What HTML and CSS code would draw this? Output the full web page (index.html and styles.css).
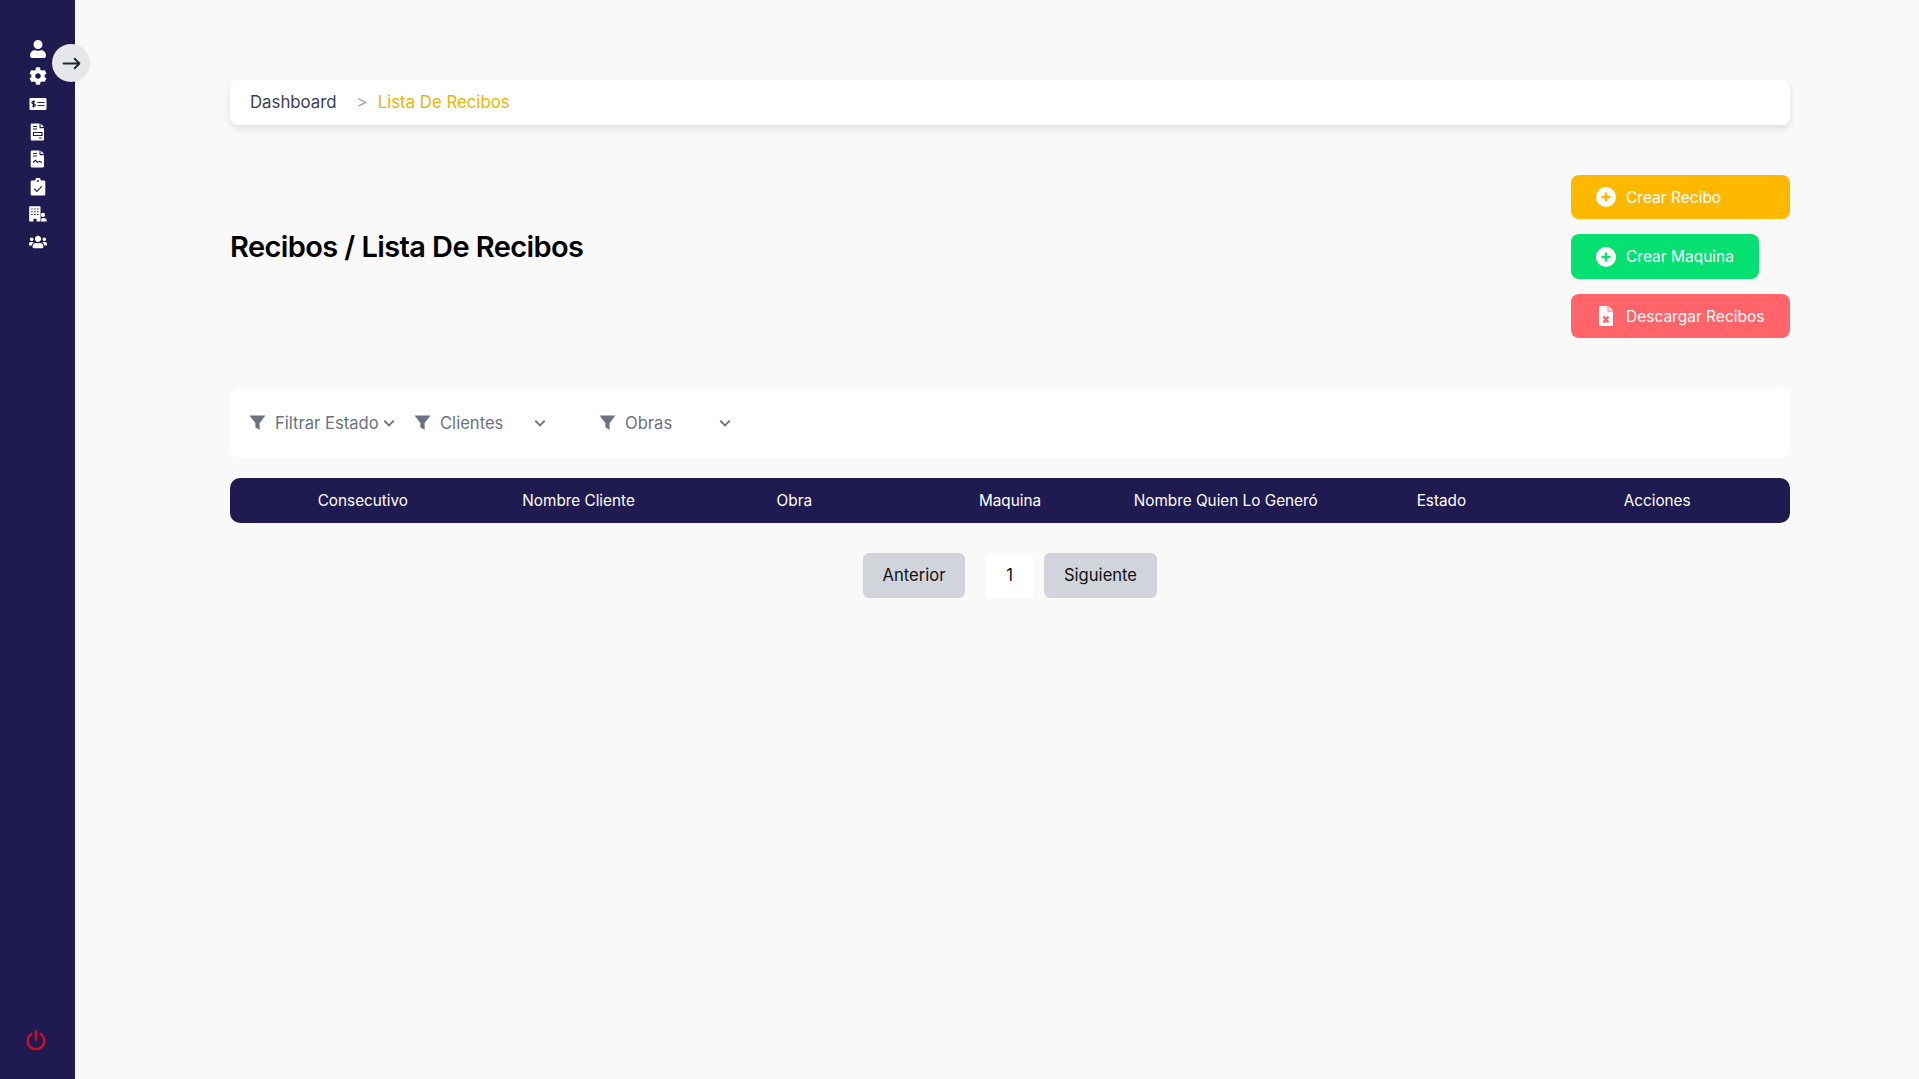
FILE: index.html
```html
<!DOCTYPE html>
<html lang="es">
<head>
  <meta charset="UTF-8">
  <title>Lista De Recibos</title>
  <link rel="stylesheet" href="styles.css">
</head>
<body>

  <!-- menu lateral -->
  <aside class="sidebar">
    <nav class="side-nav">
      <a class="side-link"><svg viewBox="0 0 448 512"><path d="M224 256c70.7 0 128-57.3 128-128S294.7 0 224 0 96 57.3 96 128s57.3 128 128 128zm89.6 32h-16.7c-22.2 10.2-46.9 16-72.9 16s-50.6-5.8-72.9-16h-16.7C60.2 288 0 348.2 0 422.4V464c0 26.5 21.5 48 48 48h352c26.5 0 48-21.5 48-48v-41.6c0-74.2-60.2-134.4-134.4-134.4z"/></svg></a>
      <a class="side-link"><svg viewBox="0 0 512 512"><path d="M487.4 315.7l-42.6-24.6c4.3-23.2 4.3-47 0-70.2l42.6-24.6c4.9-2.8 7.1-8.6 5.5-14-11.1-35.6-30-67.8-54.7-94.6-3.8-4.1-10-5.1-14.8-2.3L380.8 110c-17.9-15.4-38.5-27.3-60.8-35.1V25.8c0-5.6-3.9-10.5-9.4-11.7-36.7-8.2-74.3-7.8-109.2 0-5.5 1.2-9.4 6.1-9.4 11.7V75c-22.2 7.9-42.8 19.8-60.8 35.1L88.7 85.5c-4.9-2.8-11-1.9-14.8 2.3-24.7 26.7-43.6 58.9-54.7 94.6-1.7 5.4.6 11.2 5.5 14L67.3 221c-4.3 23.2-4.3 47 0 70.2l-42.6 24.6c-4.9 2.8-7.1 8.6-5.5 14 11.1 35.6 30 67.8 54.7 94.6 3.8 4.1 10 5.1 14.8 2.3l42.6-24.6c17.9 15.4 38.5 27.3 60.8 35.1v49.2c0 5.6 3.9 10.5 9.4 11.7 36.7 8.2 74.3 7.8 109.2 0 5.5-1.2 9.4-6.1 9.4-11.7v-49.2c22.2-7.9 42.8-19.8 60.8-35.1l42.6 24.6c4.9 2.8 11 1.9 14.8-2.3 24.7-26.7 43.6-58.9 54.7-94.6 1.5-5.5-.7-11.3-5.6-14.1zM256 336c-44.1 0-80-35.9-80-80s35.9-80 80-80 80 35.9 80 80-35.9 80-80 80z"/></svg></a>
      <a class="side-link"><svg viewBox="0 0 18 18"><rect x="0.5" y="3" width="17" height="12" rx="1.2"/><path class="cut" d="M6 6.3H4.2a1 1 0 0 0 0 2.5h.9a1 1 0 0 1 0 2.4H3.2M4.6 5.4v7M8.5 7.5h7M8.5 10.5h7"/></svg></a>
      <a class="side-link"><svg viewBox="0 0 18 18"><path d="M3 .5h7.5v4.7H15v11a1.3 1.3 0 0 1-1.3 1.3H3a1.3 1.3 0 0 1-1.3-1.3V1.8A1.3 1.3 0 0 1 3 .5zM11.6.5L15 4.1h-3.4z"/><path class="cut" d="M4 3.5h4M4 6h4M4.5 9.5H13v3H4.5zM10 15h3"/></svg></a>
      <a class="side-link"><svg viewBox="0 0 18 18"><path d="M3 .5h7.5v4.7H15v11a1.3 1.3 0 0 1-1.3 1.3H3a1.3 1.3 0 0 1-1.3-1.3V1.8A1.3 1.3 0 0 1 3 .5zM11.6.5L15 4.1h-3.4z"/><path class="cut" d="M4 3.5h4M4 6h4M4 12.5l2.5-2.2 2 2 2-1 2.5 1.2"/></svg></a>
      <a class="side-link"><svg viewBox="0 0 18 18"><path d="M3 2.5h3.2a2.8 2.8 0 0 1 5.6 0H15a1.3 1.3 0 0 1 1.3 1.3v12.400a1.3 1.3 0 0 1-1.3 1.3H3a1.3 1.3 0 0 1-1.3-1.3V3.8A1.3 1.3 0 0 1 3 2.5z"/><circle class="dot" cx="9" cy="3" r="1"/><path class="cut" d="M5.2 10.7l2.6 2.6 5-5"/></svg></a>
      <a class="side-link"><svg viewBox="0 0 20 18"><path d="M1 .5h11a.8.8 0 0 1 .8.8v15.9H8.4v-3H5v3H1a.8.8 0 0 1-.8-.8V1.3A.8.8 0 0 1 1 .5z"/><circle cx="15.5" cy="10" r="2.3"/><path d="M13.5 17.2v-1.700a2 2 0 0 1 2-2h1a3.2 3.2 0 0 1 3.2 3.2v.5z"/><path class="cut" d="M2.5 3.5h1.600M5.700 3.5h1.600M8.900 3.5h1.600M2.500 6.500h1.600M5.700 6.500h1.600M8.900 6.500h1.600M2.500 9.500h1.600M5.700 9.500h1.600M8.900 9.500h1.600"/></svg></a>
      <a class="side-link"><svg viewBox="0 0 640 512"><path d="M96 224c35.3 0 64-28.7 64-64s-28.7-64-64-64-64 28.7-64 64 28.7 64 64 64zm448 0c35.3 0 64-28.7 64-64s-28.7-64-64-64-64 28.7-64 64 28.7 64 64 64zm32 32h-64c-17.6 0-33.5 7.1-45.1 18.6 40.3 22.1 68.9 62 75.1 109.4h66c17.7 0 32-14.3 32-32v-32c0-35.3-28.7-64-64-64zm-256 0c61.9 0 112-50.1 112-112S381.900 32 320 32 208 82.100 208 144s50.100 112 112 112zm76.800 32h-8.300c-20.800 10-43.900 16-68.500 16s-47.600-6-68.500-16h-8.300C179.600 288 128 339.600 128 403.200V432c0 26.500 21.500 48 48 48h288c26.500 0 48-21.500 48-48v-28.800c0-63.600-51.600-115.200-115.200-115.200zm-223.700-13.400C161.500 263.100 145.600 256 128 256H64c-35.300 0-64 28.700-64 64v32c0 17.700 14.300 32 32 32h65.900c6.300-47.400 34.900-87.300 75.200-109.400z"/></svg></a>
    </nav>
    <button class="toggle" aria-label="Abrir menu"><svg viewBox="0 0 24 24"><path d="M2 12h20M16 6l6 6-6 6"/></svg></button>
    <a class="logout"><svg viewBox="0 0 24 24"><path d="M7 5.500a9 9 0 1 0 10 0M12 2v10"/></svg></a>
  </aside>

  <main class="content">
    <div class="breadcrumb">
      <span class="crumb">Dashboard</span>
      <span class="crumb-sep">&gt;</span>
      <span class="crumb-active">Lista De Recibos</span>
    </div>

    <section class="head-row">
      <h1>Recibos / Lista De Recibos</h1>
      <div class="actions">
        <button class="btn btn-yellow">
          <svg class="btn-icon" viewBox="0 0 20 20"><circle cx="10" cy="10" r="10" fill="#fff"/><path class="plus" d="M10 5.500v9M5.500 10h9"/></svg>
          Crear Recibo
        </button>
        <button class="btn btn-green">
          <svg class="btn-icon" viewBox="0 0 20 20"><circle cx="10" cy="10" r="10" fill="#fff"/><path class="plus" d="M10 5.500v9M5.500 10h9"/></svg>
          Crear Maquina
        </button>
        <button class="btn btn-red">
          <svg class="btn-icon" viewBox="0 0 20 20"><path fill="#fff" d="M4.500 0h7v5.500H17v13a1.500 1.500 0 0 1-1.500 1.500h-11A1.500 1.500 0 0 1 3 18.500v-17A1.500 1.500 0 0 1 4.500 0zM12.500 0L17 4.500h-4.500z"/><path class="x" d="M7.500 10.500l5 6M12.500 10.500l-5 6"/></svg>
          Descargar Recibos
        </button>
      </div>
    </section>

    <section class="filters">
      <div class="filter filter-sm">
        <svg class="funnel" viewBox="0 0 16 16"><path d="M.5 1.500h15L10 8.500V15l-4-2.500v-4z"/></svg>
        <span class="filter-label">Filtrar Estado</span>
        <svg class="chev" viewBox="0 0 12 12"><path d="M2 4l4 4 4-4"/></svg>
      </div>
      <div class="filter filter-md">
        <svg class="funnel" viewBox="0 0 16 16"><path d="M.5 1.500h15L10 8.500V15l-4-2.500v-4z"/></svg>
        <span class="filter-label">Clientes</span>
        <svg class="chev" viewBox="0 0 12 12"><path d="M2 4l4 4 4-4"/></svg>
      </div>
      <div class="filter filter-md">
        <svg class="funnel" viewBox="0 0 16 16"><path d="M.5 1.500h15L10 8.500V15l-4-2.500v-4z"/></svg>
        <span class="filter-label">Obras</span>
        <svg class="chev" viewBox="0 0 12 12"><path d="M2 4l4 4 4-4"/></svg>
      </div>
    </section>

    <div class="table-head">
      <span>Consecutivo</span>
      <span>Nombre Cliente</span>
      <span>Obra</span>
      <span>Maquina</span>
      <span>Nombre Quien Lo Generó</span>
      <span>Estado</span>
      <span>Acciones</span>
    </div>

    <div class="pager">
      <button class="page-btn">Anterior</button>
      <span class="page-num">1</span>
      <button class="page-btn page-next">Siguiente</button>
    </div>
  </main>

</body>
</html>
```

FILE: styles.css
```css
* {
  box-sizing: border-box;
}

html, body {
  height: 100%;
}

body {
  margin: 0;
  background-color: #f9f9f9;
  color: #111;
  font-family: Inter, "Liberation Sans", sans-serif;
  overflow: hidden;
}

/* menu lateral */
.sidebar {
  position: fixed;
  left: 0;
  top: 0;
  bottom: 0;
  width: 75px;
  background-color: #1f1a50;
  padding-top: 35px;
}

.side-nav {
  display: flex;
  flex-direction: column;
  align-items: center;
}

.side-link {
  height: 27.6px;
  display: flex;
  align-items: center;
  justify-content: center;
}

.side-link svg {
  height: 18px;
  width: 18px;
  fill: #fff;
}

.side-link .cut {
  fill: none;
  stroke: #1f1a50;
  stroke-width: 1.2;
}

.side-link .dot {
  fill: #1f1a50;
}

.toggle {
  position: absolute;
  left: 52px;
  top: 44px;
  width: 38px;
  height: 38px;
  border: none;
  border-radius: 50%;
  background-color: #e5e7eb;
  padding: 10px;
  display: flex;
  align-items: center;
  justify-content: center;
}

.toggle svg {
  width: 19px;
  height: 19px;
  flex: none;
  fill: none;
  stroke: #1f2937;
  stroke-width: 2.4;
  stroke-linecap: round;
  stroke-linejoin: round;
}

.logout {
  position: absolute;
  left: 25px;
  top: 1029px;
}

.logout svg {
  display: block;
  width: 22px;
  height: 22px;
  fill: none;
  stroke: #c8102e;
  stroke-width: 2.6;
  stroke-linecap: round;
}

/* contenido */
.content {
  margin-left: 230px;
  width: 1560px;
  padding-top: 80px;
}

.breadcrumb {
  height: 45px;
  background-color: #fff;
  border-radius: 8px;
  box-shadow: 0 4px 6px rgba(0,0,0,0.1);
  padding: 0 0 2px 20px;
  display: flex;
  align-items: center;
  font-size: 16.8px;
}

.crumb {
  color: #374151;
}

.crumb-sep {
  color: #9ca3af;
  margin-left: 20px;
  margin-right: 10px;
}

.crumb-active {
  color: #eab308;
}

.head-row {
  display: flex;
  justify-content: space-between;
  align-items: flex-start;
  margin-top: 50px;
}

h1 {
  margin: 54px 0 0;
  font-size: 29px;
  line-height: 35px;
  font-weight: 600;
  color: #000;
  letter-spacing: -0.6px;
}

.actions {
  display: flex;
  flex-direction: column;
  align-items: flex-start;
  gap: 15px;
  width: 219px;
}

.btn {
  height: 44px;
  border: none;
  border-radius: 8px;
  color: #fff;
  font-family: inherit;
  font-size: 15.5px;
  padding: 0 25px;
  display: flex;
  align-items: center;
  gap: 10px;
  white-space: nowrap;
}

.btn-icon {
  width: 20px;
  height: 20px;
  flex: none;
}

.btn-yellow {
  width: 219px;
  background-color: #ffb800;
  --btn: #ffb800;
}

.btn-green {
  width: 188px;
  height: 45px;
  background-color: #05e070;
  --btn: #05e070;
}

.btn-red {
  width: 219px;
  background-color: #ff646a;
  --btn: #ff646a;
}

.plus, .x {
  fill: none;
  stroke: var(--btn);
  stroke-width: 2.4;
}

.filters {
  margin-top: 50px;
  height: 70px;
  background-color: #fff;
  border-radius: 10px;
  padding: 0 0 1px 19px;
  display: flex;
  align-items: center;
  gap: 18px;
  color: #6b7280;
  font-size: 16.6px;
}

.filter {
  display: flex;
  align-items: center;
}

.filter-sm {
  width: 147px;
}

.filter-md {
  width: 133px;
  margin-right: 34px;
}

.funnel {
  width: 17px;
  height: 17px;
  fill: #6b7280;
  flex: none;
}

.filter-label {
  margin-left: 9px;
  flex: 1;
  white-space: nowrap;
}

.chev {
  width: 14px;
  height: 14px;
  fill: none;
  stroke: #6b7280;
  stroke-width: 1.7;
  flex: none;
}

.table-head {
  margin-top: 20px;
  height: 45px;
  background-color: #1f1a50;
  border-radius: 10px;
  padding: 0 25px 1px;
  display: grid;
  grid-template-columns: repeat(7, 1fr);
  align-items: center;
  text-align: center;
  color: #fff;
  font-size: 15.3px;
}

.pager {
  margin-top: 30px;
  display: flex;
  justify-content: center;
  align-items: stretch;
  font-size: 16.6px;
}

.page-btn {
  width: 102px;
  height: 45px;
  border: none;
  border-radius: 6px;
  background-color: #d1d5db;
  color: #111;
  font-family: inherit;
  font-size: 16.6px;
  padding: 0 0 2px;
}

.page-next {
  width: 113px;
}

.page-num {
  width: 49px;
  margin: 0 10px 0 20px;
  padding-bottom: 2px;
  background-color: #fff;
  border-radius: 6px;
  display: flex;
  align-items: center;
  justify-content: center;
}
```
